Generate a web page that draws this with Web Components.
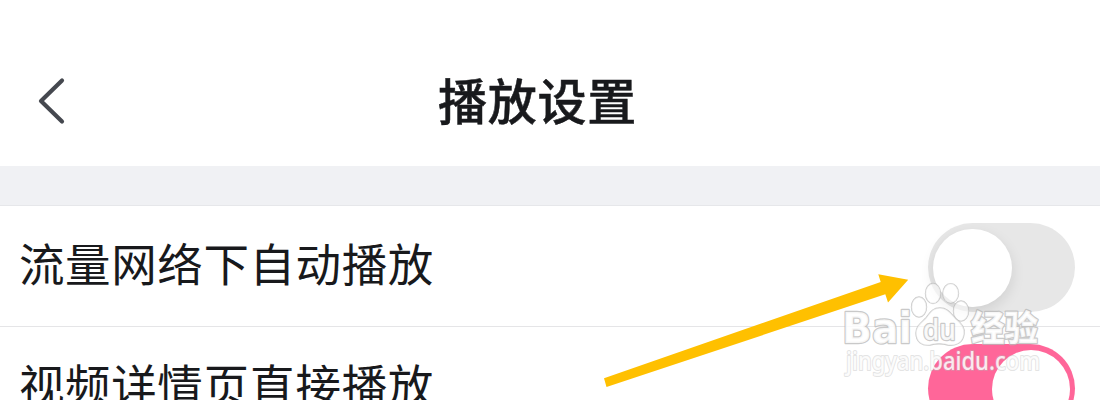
<!DOCTYPE html>
<html lang="zh-CN">
<head>
<meta charset="utf-8">
<title>播放设置</title>
<style>
body {
  margin: 0;
  height: 400px;
  overflow: hidden;
  background: #fff;
  color: #18191c;
  font-family: "Noto Sans CJK SC", sans-serif;
}
</style>
</head>
<body>
<settings-page>
  <nav-header>播放设置</nav-header>
  <setting-row>流量网络下自动播放</setting-row>
  <setting-row on>视频详情页直接播放</setting-row>
  <pointer-arrow slot="overlay"></pointer-arrow>
  <site-watermark slot="overlay"></site-watermark>
</settings-page>

<script>
function define(name, html) {
  const template = document.createElement('template');
  template.innerHTML = html;

  customElements.define(name, class extends HTMLElement {
    constructor() {
      super();
      const shadowRoot = this.attachShadow({mode: 'open'});
      shadowRoot.appendChild(document.importNode(template.content, true));
    }

    connectedCallback() {
      const toggle = this.shadowRoot.querySelector('toggle-switch');
      if (toggle) {
        toggle.toggleAttribute('on', this.hasAttribute('on'));
      }
    }
  });
}

define('settings-page', `
<style>
:host {
  display: flex;
  flex-direction: column;
  position: relative;
  height: 400px;
  overflow: hidden;
}
</style>
<slot></slot>
<slot name="overlay"></slot>
`);

define('nav-header', `
<style>
:host {
  display: block;
  flex: none;
}
header {
  display: grid;
  grid-template-columns: 1fr auto 1fr;
  align-items: center;
  height: 166px;
  padding: 36px 61px 0 36px;
  box-sizing: border-box;
}
svg {
  width: 32px;
  height: 50px;
}
h1 {
  margin: -4px 0 0;
  font-size: 49px;
  line-height: 72px;
  font-weight: 500;
  letter-spacing: .7px;
  -webkit-text-stroke: .5px currentColor;
}
div {
  height: 39px;
  background: #f0f1f4;
  border-bottom: 1px solid #e6e7ea;
}
</style>
<header>
  <svg viewBox="0 0 32 50" fill="none" stroke="#45484f" stroke-width="4.2" stroke-linecap="round" stroke-linejoin="round"><path d="M26 4.500 5 25 26 45.500"/></svg>
  <h1><slot></slot></h1>
</header>
<div></div>
`);

define('toggle-switch', `
<style>
:host {
  display: flex;
  flex: none;
  width: 147px;
  height: 89px;
  padding: 5.500px 5px;
  box-sizing: border-box;
  border-radius: 45px;
  background: #e7e7e7;
}
:host([on]) {
  justify-content: flex-end;
  background: #ff6699;
}
i {
  width: 78.500px;
  height: 78.500px;
  border-radius: 50%;
  background: #fff;
  box-shadow: 0 5px 14px rgba(0, 0, 0, .1);
}
:host([on]) i {
  box-shadow: none;
}
</style>
<i></i>
`);

define('setting-row', `
<style>
:host {
  display: flex;
  flex: none;
  align-items: center;
  justify-content: space-between;
  height: 121px;
  padding: 3px 25px 0 19px;
  box-sizing: border-box;
  border-bottom: 1px solid #e5e5e7;
}
span {
  font-size: 45.500px;
  line-height: 68px;
  letter-spacing: .6px;
  margin-top: -12px;
}
</style>
<span><slot></slot></span>
<toggle-switch></toggle-switch>
`);

define('pointer-arrow', `
<style>
:host {
  position: absolute;
  left: 600px;
  top: 268px;
}
svg {
  display: block;
}
</style>
<svg width="312" height="122"><path fill="#ffc000" d="M4 110.300 280.700 14 278.300 6.200 308.200 11.800 288 34.500 285.300 26.300 6.500 119Z"/></svg>
`);

define('site-watermark', `
<style>
:host {
  position: absolute;
  left: 840px;
  top: 276px;
}
svg {
  display: block;
}
g {
  fill: rgba(255, 255, 255, .85);
  stroke: #b8b8b8;
  stroke-opacity: .75;
  stroke-width: 2.500px;
  stroke-linejoin: round;
  paint-order: stroke;
}
.brand {
  font: bold 42px "DejaVu Sans", sans-serif;
}
.paw {
  stroke-width: 1.400px;
  fill-opacity: .7;
}
.cjk {
  font: 900 35px "Noto Sans CJK SC", sans-serif;
}
.url {
  font: 500 25px "Noto Sans", sans-serif;
  stroke-opacity: .4;
  stroke-width: 2px;
}
</style>
<svg width="210" height="108">
  <g>
    <text class="brand" x="2" y="67" textLength="70" lengthAdjust="spacingAndGlyphs">Bai</text>
    <g class="paw">
      <ellipse cx="79" cy="31" rx="7.500" ry="10"/>
      <ellipse cx="93" cy="17.500" rx="7.500" ry="10"/>
      <ellipse cx="110.700" cy="17.300" rx="7.800" ry="9.700"/>
      <ellipse cx="121" cy="35" rx="7.500" ry="10"/>
      <path d="M100 32C108 32 111 38 116 43C122 48 125 52 124 58C123 67 116 70 108 69C101 67 97 67 90 69C82 70 76 66 76 57C76 50 81 47 86 42C90 37 92 32 100 32Z"/>
    </g>
    <text x="83" y="64" font-family="Open Sans" font-size="29" font-weight="600" textLength="33" lengthAdjust="spacingAndGlyphs">du</text>
    <text class="cjk" x="131" y="65" textLength="67" lengthAdjust="spacingAndGlyphs">经验</text>
    <text class="url" x="6" y="93.500" textLength="194" lengthAdjust="spacingAndGlyphs">jingyan.baidu.com</text>
  </g>
</svg>
`);
</script>
</body>
</html>
